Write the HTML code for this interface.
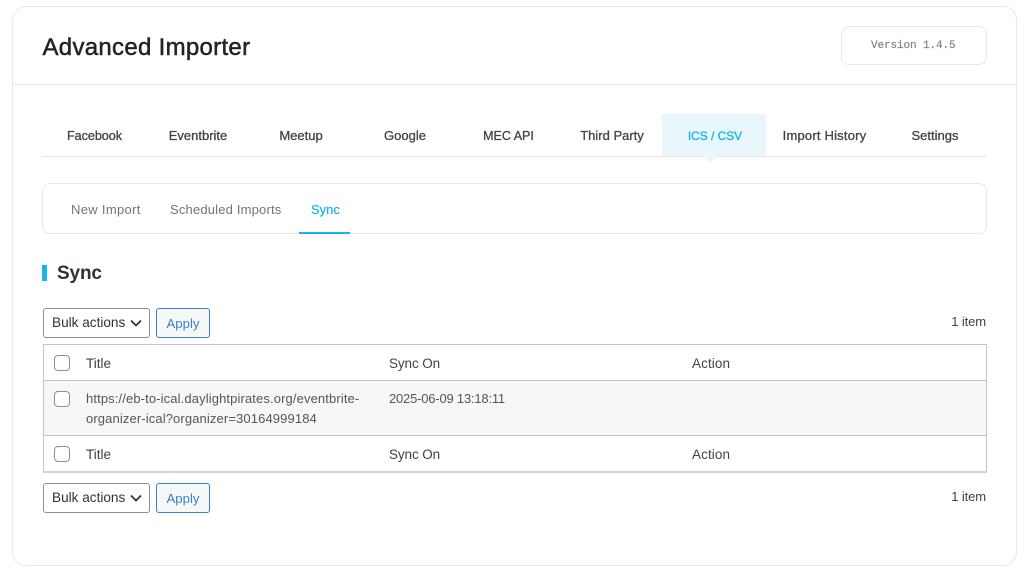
<!DOCTYPE html>
<html><head><meta charset="utf-8"><style>
html,body{margin:0;padding:0;background:#fff;width:1024px;height:575px;overflow:hidden}
body{font-family:"Liberation Sans",sans-serif;position:relative}
.a{position:absolute;white-space:nowrap}
.b{position:absolute;box-sizing:border-box}
.tab{position:absolute;top:128px;font-size:13px;line-height:16px;font-weight:400;color:#3f444b;-webkit-text-stroke:.3px #3f444b;white-space:nowrap;transform:translateX(-50%)}
.sub{position:absolute;top:202px;font-size:13px;line-height:16px;color:#71757b;white-space:nowrap}
.sel{position:absolute;left:43px;width:107px;height:30px;box-sizing:border-box;border:1px solid #8c8f94;border-radius:3px;background:#fff;font-size:13.6px;line-height:28px;padding-left:8px;color:#2c3338}
.sel svg{position:absolute;left:86px;top:10px}
.btn{position:absolute;left:156px;width:54px;height:30px;box-sizing:border-box;border:1px solid #3582c4;border-radius:3px;background:#f6f7f7;color:#3582c4;font-size:13.2px;line-height:29px;text-align:center}
.cb{position:absolute;left:54px;width:16px;height:16px;box-sizing:border-box;border:1px solid #8c8f94;border-radius:4px;background:#fff}
.th{position:absolute;font-size:13.5px;line-height:18px;color:#3c434a;white-space:nowrap}
.td{position:absolute;font-size:13px;line-height:20px;color:#50575e;white-space:nowrap}
.n{position:absolute;right:38px;font-size:13px;line-height:16px;color:#3c434a;letter-spacing:-.1px}
</style></head><body>
<div class="b" style="left:12px;top:6px;width:1005px;height:560px;border:1px solid #e6e9ec;border-radius:14px"></div>
<div class="b" style="left:13px;top:84px;width:1003px;height:1px;background:#e6e9ec"></div>
<div class="a" style="left:42.5px;top:34px;font-size:24px;line-height:28px;color:#1f2429;font-weight:400;-webkit-text-stroke:.5px #1f2429;letter-spacing:.3px">Advanced Importer</div>
<div class="b" style="left:841px;top:26px;width:146px;height:39px;border:1px solid #e6e9ec;border-radius:8px"></div>
<div class="a" style="left:871px;top:39px;font-family:'Liberation Mono',monospace;font-size:11px;line-height:14px;color:#7f858a;-webkit-text-stroke:.2px #7f858a;letter-spacing:-.1px">Version 1.4.5</div>

<div class="b" style="left:42px;top:156px;width:945px;height:1px;background:#e6e9ec"></div>
<div class="b" style="left:662px;top:114px;width:104px;height:42px;background:#e9f7fd"></div>
<div class="b" style="left:703px;top:156px;width:0;height:0;border-left:7px solid transparent;border-right:7px solid transparent;border-top:7px solid #e9f7fd"></div>
<div class="tab" style="left:94.5px;font-size:12.6px;letter-spacing:-.05px">Facebook</div>
<div class="tab" style="left:198px">Eventbrite</div>
<div class="tab" style="left:301px">Meetup</div>
<div class="tab" style="left:405px">Google</div>
<div class="tab" style="left:508.5px;font-size:12.5px;letter-spacing:0">MEC API</div>
<div class="tab" style="left:715px;font-size:12px;letter-spacing:-.05px;color:#14b5ea;-webkit-text-stroke:.3px #14b5ea">ICS / CSV</div>
<div class="tab" style="left:612px">Third Party</div>
<div class="tab" style="left:824.5px;letter-spacing:.2px">Import History</div>
<div class="tab" style="left:935px">Settings</div>

<div class="b" style="left:42px;top:183px;width:945px;height:51px;border:1px solid #e6e9ec;border-radius:8px"></div>
<div class="sub" style="left:71px;letter-spacing:.32px">New Import</div>
<div class="sub" style="left:170px;letter-spacing:.18px">Scheduled Imports</div>
<div class="sub" style="left:311px;color:#14b5ea;-webkit-text-stroke:.2px #14b5ea">Sync</div>
<div class="b" style="left:299px;top:232px;width:51px;height:2px;background:#14b5ea"></div>

<div class="b" style="left:42px;top:265px;width:5px;height:16px;background:#14b5ea"></div>
<div class="a" style="left:57px;top:262px;font-size:19px;line-height:24px;font-weight:700;color:#2c3338;letter-spacing:-.15px">Sync</div>

<div class="sel" style="top:308px">Bulk actions<svg width="12" height="8" viewBox="0 0 12 8"><path d="M1 1.5L6 6.5L11 1.5" fill="none" stroke="#2c3338" stroke-width="1.7"/></svg></div>
<div class="btn" style="top:308px">Apply</div>
<div class="n" style="top:314px">1 item</div>

<div class="b" style="left:43px;top:344px;width:944px;height:129px;border:1px solid #c3c4c7;border-bottom-width:2px;border-bottom-color:#d3d5d8;background:#fff"></div>
<div class="b" style="left:44px;top:380px;width:942px;height:56px;background:#f6f7f7;border-top:1px solid #c3c4c7;border-bottom:1px solid #c3c4c7"></div>
<div class="cb" style="top:355px"></div>
<div class="th" style="left:86px;top:355px">Title</div>
<div class="th" style="left:389px;top:355px;letter-spacing:-.1px">Sync On</div>
<div class="th" style="left:692px;top:355px;letter-spacing:.1px">Action</div>
<div class="cb" style="top:391px"></div>
<div class="td" style="left:86px;top:389px;letter-spacing:.12px">https://eb-to-ical.daylightpirates.org/eventbrite-<br>organizer-ical?organizer=30164999184</div>
<div class="td" style="left:389px;top:389px;letter-spacing:-.2px">2025-06-09 13:18:11</div>
<div class="cb" style="top:446px"></div>
<div class="th" style="left:86px;top:446px">Title</div>
<div class="th" style="left:389px;top:446px;letter-spacing:-.1px">Sync On</div>
<div class="th" style="left:692px;top:446px;letter-spacing:.1px">Action</div>

<div class="sel" style="top:483px">Bulk actions<svg width="12" height="8" viewBox="0 0 12 8"><path d="M1 1.5L6 6.5L11 1.5" fill="none" stroke="#2c3338" stroke-width="1.7"/></svg></div>
<div class="btn" style="top:483px">Apply</div>
<div class="n" style="top:489px">1 item</div>
</body></html>
